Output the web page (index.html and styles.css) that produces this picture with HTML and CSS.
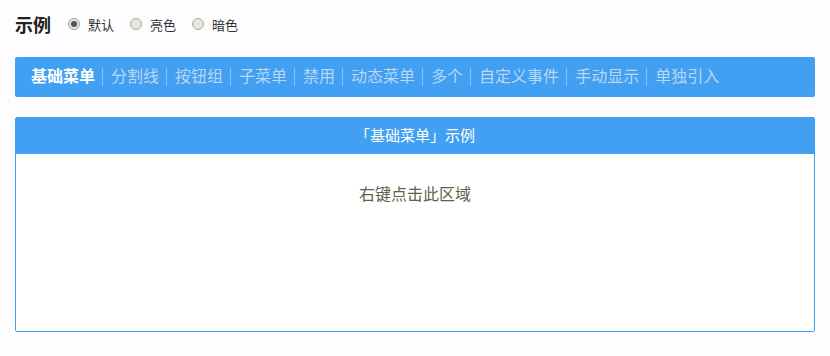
FILE: index.html
```html
<!DOCTYPE html>
<html lang="zh-CN">
<head>
    <meta charset="UTF-8">
    <meta name="viewport" content="width=device-width, initial-scale=1.0">
    <title>右键菜单示例</title>
    <link rel="stylesheet" href="styles.css">
</head>
<body>

<div class="page">

    <!-- Title + theme switch -->
    <div class="title-row">
        <h2>示例</h2>
        <label class="theme"><span class="radio checked"></span>默认</label>
        <label class="theme"><span class="radio"></span>亮色</label>
        <label class="theme"><span class="radio"></span>暗色</label>
    </div>

    <!-- Demo tabs -->
    <div class="tabs">
        <a class="tab active">基础菜单</a>
        <a class="tab">分割线</a>
        <a class="tab">按钮组</a>
        <a class="tab">子菜单</a>
        <a class="tab">禁用</a>
        <a class="tab">动态菜单</a>
        <a class="tab">多个</a>
        <a class="tab">自定义事件</a>
        <a class="tab">手动显示</a>
        <a class="tab">单独引入</a>
    </div>

    <!-- Demo panel -->
    <div class="panel">
        <div class="panel-header">「基础菜单」示例</div>
        <div class="panel-body">右键点击此区域</div>
    </div>
</div>

</body>
</html>
```

FILE: styles.css
```css
body {
    font-family: "Liberation Sans", "Noto Sans CJK SC", sans-serif;
    background-color: #fdfdff;
    color: #333;
    margin: 0;
}

.page {
    padding: 12px 15px 0 15px;
}

.title-row {
    display: flex;
    align-items: center;
    height: 24px;
}

.title-row h2 {
    margin: 0 17px 0 0;
    font-size: 18px;
    font-weight: bold;
    color: #222;
}

.theme {
    display: flex;
    align-items: center;
    font-size: 13px;
    color: #333;
    margin-right: 16px;
}

.radio {
    display: inline-block;
    box-sizing: border-box;
    width: 12px;
    height: 12px;
    border: 1px solid #a8a8a0;
    border-radius: 50%;
    background-color: #e6e6dc;
    margin-right: 8px;
    position: relative;
}

.radio.checked::after {
    content: "";
    position: absolute;
    left: 2px;
    top: 2px;
    width: 6px;
    height: 6px;
    border-radius: 50%;
    background-color: #555;
}

.tabs {
    display: flex;
    align-items: center;
    margin-top: 21px;
    height: 40px;
    padding-left: 16px;
    background-color: #42a0f2;
    border-radius: 2px;
}

.tab {
    font-size: 16px;
    line-height: 40px;
    color: #b9d6f2;
    position: relative;
}

.tab + .tab {
    margin-left: 16px;
}

.tab + .tab::before {
    content: "";
    position: absolute;
    left: -9px;
    top: 11px;
    width: 1px;
    height: 18px;
    background-color: #8cc3f2;
}

.tab.active {
    color: #fff;
    font-weight: bold;
}

.panel {
    margin-top: 20px;
    border: 1px solid #42a0f2;
    border-radius: 2px;
    background-color: #fff;
    height: 213px;
}

.panel-header {
    height: 36px;
    line-height: 36px;
    background-color: #42a0f2;
    color: #fff;
    font-size: 15px;
    text-align: center;
}

.panel-body {
    padding-top: 27px;
    text-align: center;
    font-size: 16px;
    color: #5f5f4a;
}
```
